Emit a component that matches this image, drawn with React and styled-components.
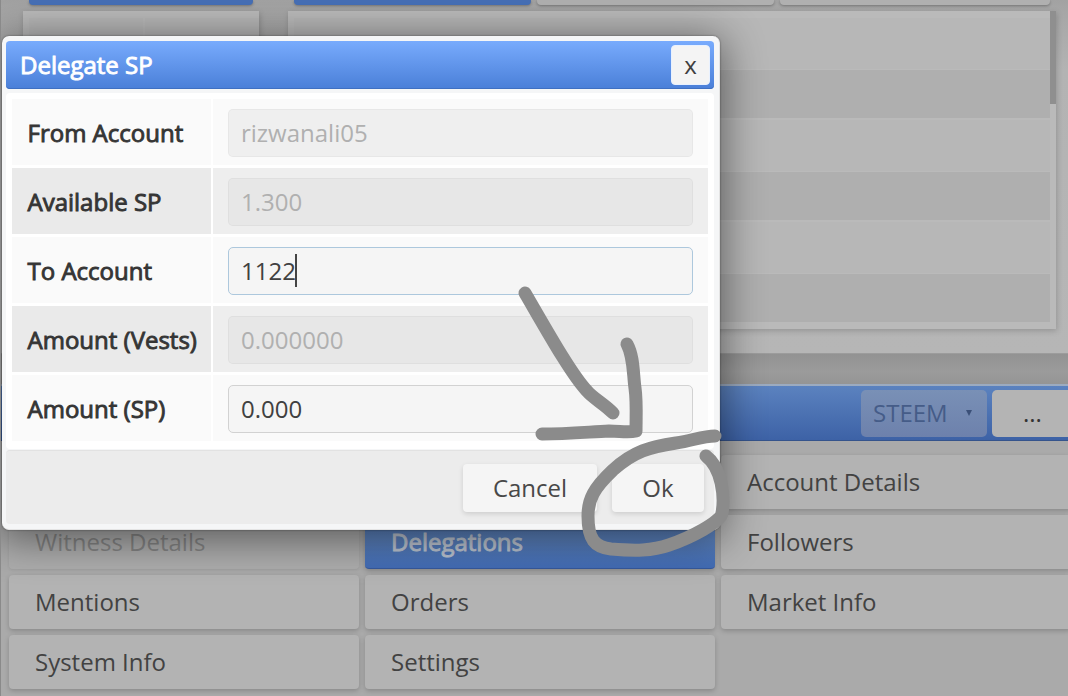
import React from "react";
import styled, { createGlobalStyle, css } from "styled-components";

const GlobalStyle = createGlobalStyle`
  * {
    box-sizing: border-box;
  }

  body {
    margin: 0;
    overflow: hidden;
    background: #aaaaaa;
    color: #404040;
    font-family: "Open Sans", sans-serif;
    font-size: 24px;
  }
`;

const fauxBold = css`
  -webkit-text-stroke: 0.9px currentColor;
`;

const Page = styled.div`
  position: relative;
  width: 1068px;
  height: 696px;
  overflow: hidden;
  border-left: 1px solid #8a8a8a;
`;

const TopPanel = styled.section`
  height: 354px;
  padding: 0 0 0 22px;
  display: flex;
  gap: 29px;
  background: linear-gradient(#a2a2a2, #a6a6a6 12px, #b3b3b3 70px, #b6b6b6);
  border-bottom: 1px solid #9c9c9c;
`;

const Column = styled.div`
  width: ${(props) => props.$width}px;
`;

const Tabs = styled.div`
  display: flex;
  gap: 6px;
  height: 5px;
  margin: 0 6px 6px;
`;

const Tab = styled.div`
  width: ${(props) => props.$width}px;
  border-radius: 0 0 4px 4px;
  background: ${(props) => (props.$active ? "#466fb6" : "#b0b0b0")};
  box-shadow: 0 1px 3px rgba(0, 0, 0, 0.3);
`;

const List = styled.div`
  display: flex;
  height: 318px;
  background: #bababa;
  box-shadow: 1px 2px 6px rgba(0, 0, 0, 0.18);
`;

const Rows = styled.div`
  flex: 1;
  padding: 7px 0 0 6px;
`;

const Row = styled.div`
  display: flex;
  gap: 2px;
  height: ${(props) => (props.$odd ? 48 : 51)}px;
  margin-bottom: ${(props) => (props.$odd ? 2 : 1)}px;
`;

const Cell = styled.div`
  flex: 1;
  padding: 9px 14px;
  overflow: hidden;
  white-space: nowrap;
  line-height: 33px;
  background: ${(props) => (props.$odd ? "#afafaf" : "#b7b7b7")};
  color: ${(props) => (props.$link ? "#254a91" : "#333333")};
`;

const Scrollbar = styled.div`
  width: 6px;
  height: 93px;
  background: #8f8f8f;
`;

const Divider = styled.div`
  height: 30px;
  background: linear-gradient(#929292, #9b9b9b 60%, #959595);
`;

const BlueBar = styled.header`
  height: 57px;
  display: flex;
  justify-content: flex-end;
  gap: 5px;
  padding: 4px 0 3px;
  border-top: 2px solid #9cabc0;
  border-bottom: 1px solid #35548c;
  background: linear-gradient(#5b82bf, #3d62a6);
`;

const Currency = styled.div`
  display: flex;
  align-items: center;
  justify-content: space-between;
  width: 126px;
  padding: 0 15px 2px 12px;
  border-radius: 5px;
  background: linear-gradient(#7990b6, #6d81ac);
  color: #455c88;
`;

const Caret = styled.span`
  border: 3.5px solid transparent;
  border-top: 6px solid #3b5078;
  border-bottom: 0;
`;

const More = styled.div`
  width: 76px;
  padding-left: 31px;
  line-height: 46px;
  border-radius: 5px 0 0 5px;
  background: #b4b4b4;
  color: #333333;
`;

const Menu = styled.nav`
  display: grid;
  grid-template-columns: repeat(3, 350px);
  grid-auto-rows: 54px;
  gap: 6px;
  height: 255px;
  padding: 14px 0 0 8px;
  background: #aaaaaa;
`;

const MenuItem = styled.div`
  padding-left: 26px;
  line-height: 53px;
  border-radius: 4px;
  background: #b3b3b3;
  color: #424242;
  box-shadow: 0 2px 5px rgba(0, 0, 0, 0.2);

  ${(props) =>
    props.$disabled &&
    css`
      background: #adadad;
      color: #858585;
      box-shadow: 0 1px 3px rgba(0, 0, 0, 0.08);
    `}

  ${(props) =>
    props.$active &&
    css`
      background: linear-gradient(#5b82bf, #5a81bd 45%, #426cb5);
      border-bottom: 1px solid #36599b;
      color: #bdc5d1;
      ${fauxBold}
    `}
`;

const Dialog = styled.div`
  position: absolute;
  top: 36px;
  left: 1px;
  width: 718px;
  height: 494px;
  padding: 5px 5px 6px 4px;
  border: 1px solid #e4e4e4;
  border-width: 0 1px 1px 0;
  border-radius: 7px;
  background: #f5f6f7;
  box-shadow: 0 6px 40px 4px rgba(0, 0, 0, 0.48), 0 0 2px rgba(0, 0, 0, 0.5);
`;

const TitleBar = styled.div`
  display: flex;
  justify-content: space-between;
  height: 48px;
  padding: 4px 4px 4px 14px;
  border-radius: 4px;
  background: linear-gradient(#78abfd, #4a7fd8);
  box-shadow: inset 0 -1px 0 #3f70c2;
  color: #ffffff;
  line-height: 40px;
`;

const Title = styled.span`
  ${fauxBold}
`;

const CloseButton = styled.button`
  width: 39px;
  height: 40px;
  padding: 0;
  border: 1px solid #e8f1ff;
  border-radius: 4px;
  background: #f4f4f4;
  color: #404040;
  font: 24px "Open Sans", sans-serif;
  line-height: 36px;
`;

const Form = styled.div`
  display: grid;
  grid-auto-rows: 66px;
  gap: 3px;
  height: 356px;
  margin-top: 4px;
  padding: 6px;
  border-radius: 4px;
  background: #ffffff;
`;

const Field = styled.label`
  display: grid;
  grid-template-columns: 199px 1fr;
  gap: 2px;

  > * {
    background: ${(props) => (props.$shaded ? "#eaeaea" : "#fafafa")};
  }

  > :last-child {
    background: ${(props) => (props.$shaded ? "#eeeeee" : "#fafafa")};
  }
`;

const Label = styled.span`
  height: 66px;
  padding-left: 15.5px;
  line-height: 67px;
  color: #353535;
  ${fauxBold}
`;

const Value = styled.div`
  padding: 10px 15px 8px;
`;

const Input = styled.div`
  display: flex;
  align-items: center;
  height: 48px;
  padding: 0 0 1px 12px;
  border: 1.5px solid ${(props) => (props.$focused ? "#adc8dd" : "#d2d2d2")};
  border-radius: 5px;
  background: #f5f5f5;

  ${(props) =>
    props.$disabled &&
    css`
      border-color: rgba(0, 0, 0, 0.03);
      background: ${props.$shaded ? "#e7e7e7" : "#efefef"};
      color: #b0b0b0;
    `}
`;

const TextCaret = styled.span`
  width: 2px;
  height: 33px;
  margin-left: -1px;
  background: #444444;
`;

const Actions = styled.div`
  display: flex;
  justify-content: flex-end;
  gap: 15px;
  height: 74px;
  margin-top: 1px;
  padding: 13px 10px;
  border-top: 1px solid #e2e2e2;
  border-radius: 4px;
  background: #ececec;
`;

const Button = styled.button`
  width: ${(props) => props.$width}px;
  height: 48px;
  padding: 0 0 1px;
  border: 0;
  border-radius: 4px;
  background: #f5f5f5;
  box-shadow: 0 2px 5px rgba(0, 0, 0, 0.13);
  color: #484848;
  font: 24px "Open Sans", sans-serif;
`;

const Drawing = styled.svg`
  position: absolute;
  top: 0;
  left: -1px;
  pointer-events: none;
`;

const fields = [
  { label: "From Account", value: "rizwanali05", disabled: true },
  { label: "Available SP", value: "1.300", disabled: true },
  { label: "To Account", value: "1122", focused: true },
  { label: "Amount (Vests)", value: "0.000000", disabled: true },
  { label: "Amount (SP)", value: "0.000" },
];

const menu = [
  { name: "" },
  { name: "" },
  { name: "Account Details" },
  { name: "Witness Details", disabled: true },
  { name: "Delegations", active: true },
  { name: "Followers" },
  { name: "Mentions" },
  { name: "Orders" },
  { name: "Market Info" },
  { name: "System Info" },
  { name: "Settings" },
];

function DelegateDialog() {
  return (
    <Dialog>
      <TitleBar>
        <Title>Delegate SP</Title>
        <CloseButton>x</CloseButton>
      </TitleBar>
      <Form>
        {fields.map((field, i) => (
          <Field key={field.label} $shaded={i % 2 === 1}>
            <Label>{field.label}</Label>
            <Value>
              <Input
                $disabled={field.disabled}
                $focused={field.focused}
                $shaded={i % 2 === 1}
              >
                {field.value}
                {field.focused && <TextCaret />}
              </Input>
            </Value>
          </Field>
        ))}
      </Form>
      <Actions>
        <Button $width={134}>Cancel</Button>
        <Button $width={92}>Ok</Button>
      </Actions>
    </Dialog>
  );
}

export default function App() {
  return (
    <Page>
      <GlobalStyle />
      <TopPanel>
        <Column $width={236}>
          <Tabs>
            <Tab $active $width={226} />
          </Tabs>
          <List>
            <Rows>
              <Row>
                <Cell />
                <Cell />
              </Row>
            </Rows>
          </List>
        </Column>
        <Column $width={768}>
          <Tabs>
            <Tab $active $width={237} />
            <Tab $width={237} />
            <Tab $width={270} />
          </Tabs>
          <List>
            <Rows>
              {[0, 1, 2, 3, 4, 5].map((n) => (
                <Row key={n} $odd={n % 2 === 1}>
                  <Cell $odd={n % 2 === 1} />
                </Row>
              ))}
            </Rows>
            <Scrollbar />
          </List>
        </Column>
      </TopPanel>
      <Divider />
      <BlueBar>
        <Currency>
          STEEM
          <Caret />
        </Currency>
        <More>...</More>
      </BlueBar>
      <Menu>
        {menu.map((item, i) => (
          <MenuItem key={i} $active={item.active} $disabled={item.disabled}>
            {item.name}
          </MenuItem>
        ))}
      </Menu>
      <DelegateDialog />
      <Drawing
        width="1068"
        height="696"
        fill="none"
        stroke="#8b8b8b"
        strokeWidth="13"
        strokeLinecap="round"
        strokeLinejoin="round"
      >
        <path d="M525 293C546 329 571 374 587 391C594 399 603 403 613 413" />
        <path d="M627 344C634 357 633 374 635 388C637 402 636 419 636 431C628 433 620 431 609 431C588 432 566 434 542 434" />
        <path d="M715 436C702 436 692 441 676 443C650 447 634 451 613 470C594 488 588 499 588 516C588 540 595 547 611 549C635 551 652 551 669 545C690 538 721 522 722 513C725 497 722 468 706 456" />
      </Drawing>
    </Page>
  );
}
